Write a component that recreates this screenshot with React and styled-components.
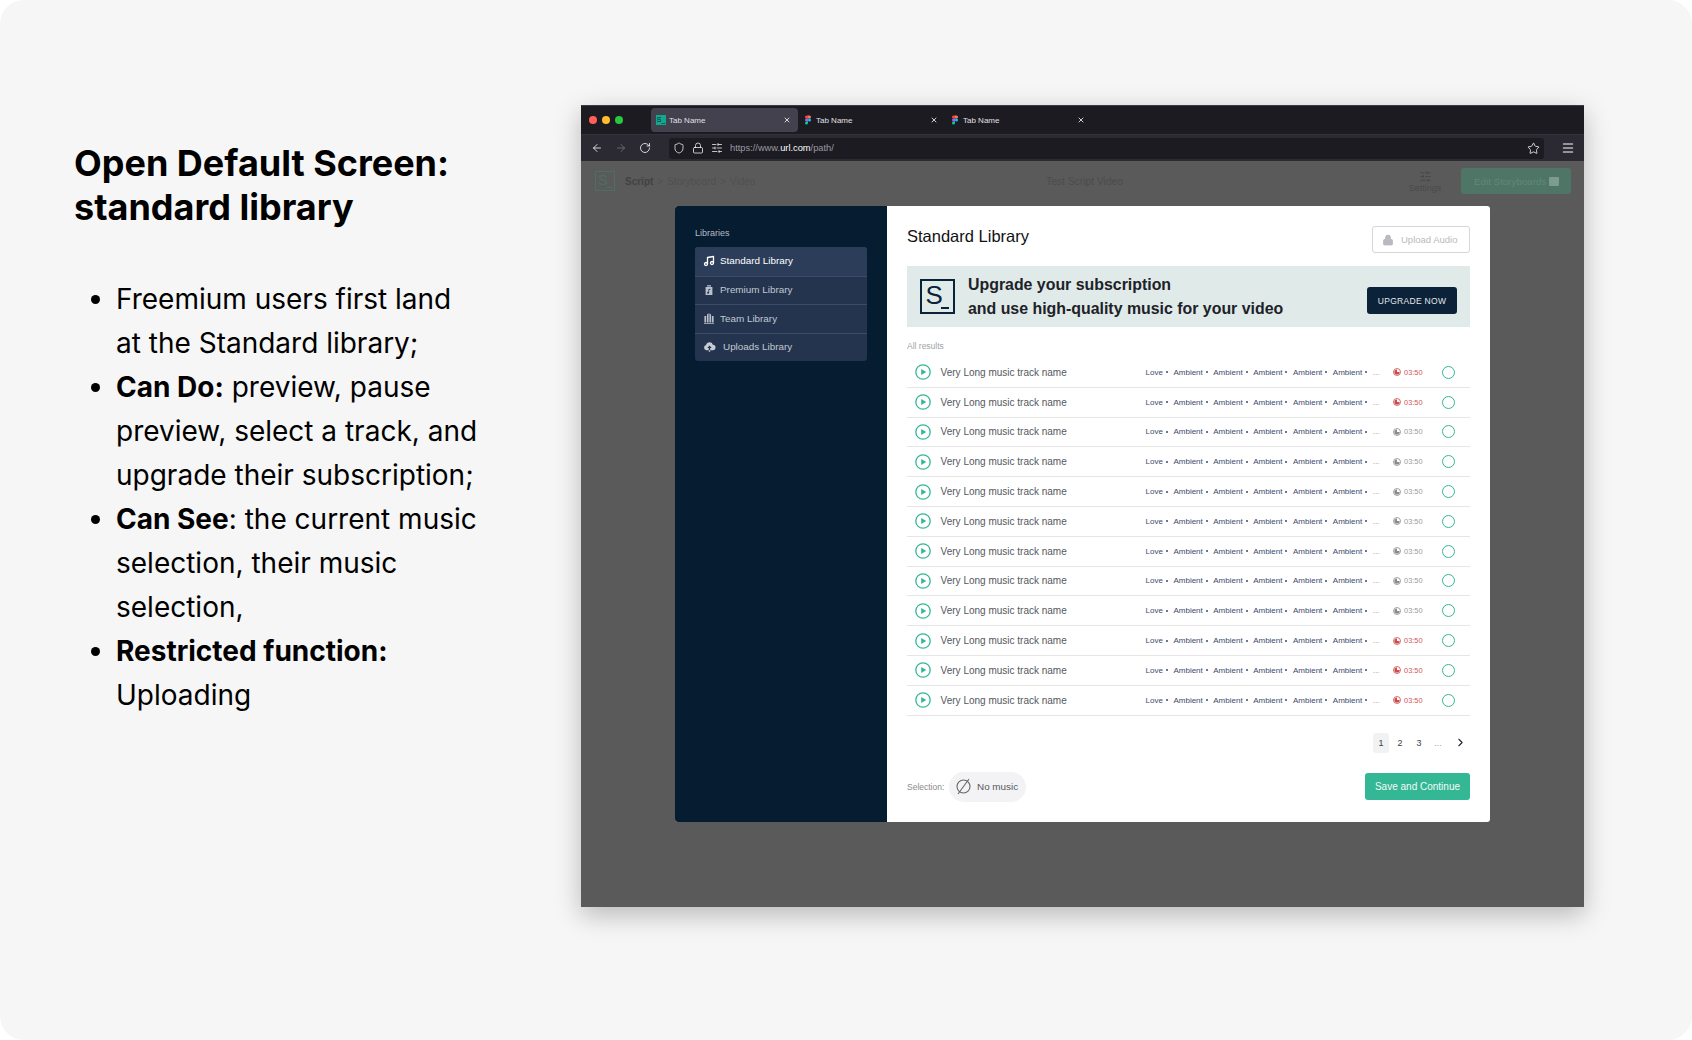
import React from "react";
import styled, { createGlobalStyle } from "styled-components";
import {
  ArrowLeft,
  ArrowRight,
  RotateCw,
  Shield,
  Lock,
  SlidersHorizontal,
  Star,
  Menu,
  X,
  ChevronRight,
  Music,
} from "lucide-react";

const GlobalStyle = createGlobalStyle`
  html, body {
    margin: 0;
    padding: 0;
    background: #fff;
  }
  * {
    box-sizing: border-box;
  }
`;

const tracks = [
  "red", "red", "grey", "grey", "grey", "grey",
  "grey", "grey", "grey", "red", "red", "red",
];

const libraries = [
  { name: "Standard Library", Icon: NoteIcon, active: true },
  { name: "Premium Library", Icon: BagIcon },
  { name: "Team Library", Icon: BuildingIcon },
  { name: "Uploads Library", Icon: CloudIcon, wide: true },
];

function NoteIcon() {
  return <Music size={12} color="#fff" strokeWidth={2.6} />;
}

function BagIcon() {
  return (
    <svg width="12" height="12" viewBox="0 0 12 12" fill="#b9c0cc">
      <path d="M4 1.2h4v1.2H4z" />
      <path d="M2.6 3h6.8v8H2.6zM7.4 4.8 5.4 5.3v2.600a1 1 0 1 0 .7.900V6l1.300-.3z" fillRule="evenodd" />
    </svg>
  );
}

function BuildingIcon() {
  return (
    <svg width="12" height="12" viewBox="0 0 12 12" fill="#b9c0cc">
      <path d="M1 11h10v.7H1zM1.4 4h1.800v6.400H1.400zM4 2.400l1.600-1.200v9.200H4zM6.400 1.200 8 2.400v8H6.400zM8.800 4h1.800v6.400H8.800z" />
    </svg>
  );
}

function CloudIcon() {
  return (
    <svg width="13" height="12" viewBox="0 0 13 12" fill="#c6ccd6">
      <path d="M3.400 9.200A2.600 2.600 0 0 1 3 4.100a3.600 3.600 0 0 1 6.900-.3 2.700 2.700 0 0 1-.2 5.400H7.200V7h1.500L6.500 4.600 4.300 7h1.500v2.200z" />
      <path d="M5.800 9.200h1.400v1.600H5.800z" />
    </svg>
  );
}

function FigmaIcon() {
  return (
    <svg width="10" height="10" viewBox="-2 -0.500 10 10">
      <path d="M0 1.500A1.500 1.500 0 0 1 1.500 0H3v3H1.500A1.500 1.500 0 0 1 0 1.500z" fill="#f24e1e" />
      <path d="M3 0h1.500a1.500 1.500 0 0 1 0 3H3z" fill="#ff7262" />
      <path d="M0 4.500A1.500 1.500 0 0 1 1.500 3H3v3H1.500A1.500 1.500 0 0 1 0 4.500z" fill="#a259ff" />
      <circle cx="4.500" cy="4.500" r="1.500" fill="#1abcfe" />
      <path d="M0 7.500A1.500 1.500 0 0 1 1.500 6H3v1.500a1.500 1.500 0 0 1-3 0z" fill="#0acf83" />
    </svg>
  );
}

function PlayIcon() {
  return (
    <svg width="16" height="16" viewBox="0 0 16 16">
      <circle cx="8" cy="8" r="7.200" fill="none" stroke="#34b794" strokeWidth="1.300" />
      <path d="M6.200 4.900v6.200L11.200 8z" fill="#34b794" />
    </svg>
  );
}

function ClockIcon({ color }) {
  return (
    <svg width="8" height="8" viewBox="0 0 8 8">
      <circle cx="4" cy="4" r="3.500" fill="#fff" stroke={color} strokeWidth="0.800" />
      <path d="M4 4V1.400A2.600 2.600 0 1 0 6.600 4z" fill={color} />
    </svg>
  );
}

function NoMusicIcon() {
  return (
    <svg width="17" height="17" viewBox="0 0 17 17" fill="none" stroke="#666" strokeWidth="1.100">
      <circle cx="8.500" cy="8.500" r="6.500" />
      <path d="M3 16 14 1" />
    </svg>
  );
}

function LogoMark({ size, color, stroke }) {
  return (
    <Logo $size={size} $color={color} $stroke={stroke}>
      S<LogoBar $color={color} />
    </Logo>
  );
}

const Tab = ({ active, children }) => (
  <TabItem $active={active}>
    {children}
    <TabName>Tab Name</TabName>
    <X size={8} color="#fff" strokeWidth={2.4} />
  </TabItem>
);

export default function App() {
  return (
    <Slide>
      <GlobalStyle />
      <Notes>
        <Heading>
          Open Default Screen:
          <br />
          standard library
        </Heading>
        <NoteList>
          <li>Freemium users first land at the Standard library;</li>
          <li>
            <b>Can Do:</b> preview, pause preview, select a track, and upgrade their subscription;
          </li>
          <li>
            <b>Can See</b>: the current music selection, their music selection,
          </li>
          <li>
            <b>Restricted function:</b> Uploading
          </li>
        </NoteList>
      </Notes>

      <BrowserWindow>
        <TabBar>
          <Lights>
            <Light $color="#ff5f57" />
            <Light $color="#febc2e" />
            <Light $color="#28c840" />
          </Lights>
          <Tab active>
            <Favicon>S_</Favicon>
          </Tab>
          <Tab>
            <FigmaIcon />
          </Tab>
          <Tab>
            <FigmaIcon />
          </Tab>
        </TabBar>

        <ToolBar>
          <NavButtons>
            <ArrowLeft size={12} color="#fbfbfe" strokeWidth={1.6} />
            <ArrowRight size={12} color="#77767c" strokeWidth={1.6} />
            <RotateCw size={12} color="#fbfbfe" strokeWidth={1.6} />
          </NavButtons>
          <UrlBar>
            <Shield size={12} color="#fbfbfe" strokeWidth={1.5} />
            <Lock size={12} color="#fbfbfe" strokeWidth={1.5} />
            <SlidersHorizontal size={12} color="#fbfbfe" strokeWidth={1.5} />
            <UrlText>
              https://www.<strong>url.com</strong>/path/
            </UrlText>
            <Star size={13} color="#fbfbfe" strokeWidth={1.5} />
          </UrlBar>
          <Menu size={14} color="#fbfbfe" strokeWidth={1.8} />
        </ToolBar>

        <Page>
          <AppHeader>
            <Crumbs>
              <LogoMark size={20} color="#4d6e62" stroke={1} />
              <CrumbStrong>Script</CrumbStrong>
              <Crumb>&gt;</Crumb>
              <Crumb>Storyboard</Crumb>
              <Crumb>&gt;</Crumb>
              <Crumb>Video</Crumb>
            </Crumbs>
            <VideoTitle>Test Script Video</VideoTitle>
            <SettingsButton>
              <SlidersHorizontal size={13} color="#454545" strokeWidth={1.4} />
              Settings
            </SettingsButton>
            <EditButton>
              Edit Storyboards
              <EditBox />
            </EditButton>
          </AppHeader>

          <Modal>
            <Sidebar>
              <SidebarLabel>Libraries</SidebarLabel>
              <LibraryList>
                {libraries.map(({ name, Icon, active, wide }) => (
                  <LibraryRow key={name} $active={active} $wide={wide}>
                    <Icon />
                    {name}
                  </LibraryRow>
                ))}
              </LibraryList>
            </Sidebar>

            <Content>
              <TitleRow>
                <Title>Standard Library</Title>
                <UploadButton>
                  <Lock size={12} color="#b8bac0" fill="#b8bac0" strokeWidth={1.5} />
                  Upload Audio
                </UploadButton>
              </TitleRow>

              <Banner>
                <LogoMark size={35} color="#0b2238" stroke={2} />
                <BannerText>
                  Upgrade your subscription
                  <br />
                  and use high-quality music for your video
                </BannerText>
                <UpgradeButton>UPGRADE NOW</UpgradeButton>
              </Banner>

              <ResultsLabel>All results</ResultsLabel>

              <TrackList>
                {tracks.map((tone, i) => (
                  <TrackRow key={i}>
                    <PlayIcon />
                    <TrackName>Very Long music track name</TrackName>
                    <Tags>
                      <Tag>Love</Tag>
                      <Tag>Ambient</Tag>
                      <Tag>Ambient</Tag>
                      <Tag>Ambient</Tag>
                      <Tag>Ambient</Tag>
                      <Tag>Ambient</Tag>
                      <More>...</More>
                    </Tags>
                    <Duration $tone={tone}>
                      <ClockIcon color={tone === "red" ? "#cf4a4a" : "#8b8b8b"} />
                      03:50
                    </Duration>
                    <Radio />
                  </TrackRow>
                ))}
              </TrackList>

              <Pagination>
                <PageNumber $active>1</PageNumber>
                <PageNumber>2</PageNumber>
                <PageNumber>3</PageNumber>
                <PageNumber $muted>...</PageNumber>
                <NextPage>
                  <ChevronRight size={13} color="#1c2733" strokeWidth={2} />
                </NextPage>
              </Pagination>

              <Footer>
                <SelectionLabel>Selection:</SelectionLabel>
                <SelectionPill>
                  <NoMusicIcon />
                  No music
                </SelectionPill>
                <SaveButton>Save and Continue</SaveButton>
              </Footer>
            </Content>
          </Modal>
        </Page>
      </BrowserWindow>
    </Slide>
  );
}

const Slide = styled.div`
  width: 1692px;
  height: 1040px;
  display: flex;
  align-items: flex-start;
  background: #f6f6f6;
  border-radius: 24px;
  overflow: hidden;
`;

const Notes = styled.div`
  width: 581px;
  flex-shrink: 0;
  padding: 141px 100px 0 74px;
  font-family: "Inter", sans-serif;
  color: #000;
`;

const Heading = styled.h1`
  margin: 0 0 48px;
  font-size: 36px;
  line-height: 44px;
  font-weight: 700;
`;

const NoteList = styled.ul`
  margin: 0;
  padding: 0 0 0 42px;
  font-size: 28px;
  line-height: 44px;
  font-weight: 400;

  b {
    font-weight: 700;
  }
`;

const BrowserWindow = styled.div`
  width: 1003px;
  height: 802px;
  margin-top: 105px;
  display: flex;
  flex-direction: column;
  box-shadow: 0 8px 24px rgba(0, 0, 0, 0.25);
  font-family: "Liberation Sans", Arial, sans-serif;
`;

const TabBar = styled.div`
  height: 29px;
  padding: 2px 0 2px 8px;
  display: flex;
  align-items: stretch;
  background: #1c1b22;
  border-top: 1px solid #3c3b42;
`;

const Lights = styled.div`
  width: 62px;
  display: flex;
  align-items: center;
  gap: 5px;
`;

const Light = styled.span`
  width: 8px;
  height: 8px;
  border-radius: 50%;
  background: ${(p) => p.$color};
`;

const TabItem = styled.div`
  width: 147px;
  padding: 0 7px 0 5px;
  display: flex;
  align-items: center;
  gap: 3px;
  border-radius: 4px;
  background: ${(p) => (p.$active ? "#42414d" : "transparent")};
`;

const TabName = styled.span`
  flex: 1;
  font-size: 8px;
  color: #e0e0e4;
`;

const Favicon = styled.span`
  width: 10px;
  height: 10px;
  background: #0eaa8b;
  color: #0b2238;
  font-size: 7px;
  line-height: 10px;
  text-align: center;
`;

const ToolBar = styled.div`
  height: 27px;
  padding: 3px 9px 3px 10px;
  display: flex;
  align-items: center;
  background: #2b2a33;
  border-top: 1px solid #33323b;
`;

const NavButtons = styled.div`
  width: 78px;
  display: flex;
  gap: 12px;
`;

const UrlBar = styled.div`
  width: 875px;
  height: 21px;
  margin-right: 17px;
  padding: 0 4px 0 4px;
  display: flex;
  align-items: center;
  gap: 7px;
  border-radius: 3px;
  background: #1c1b22;
`;

const UrlText = styled.span`
  flex: 1;
  font-size: 9.300px;
  color: #9a9aa0;

  strong {
    font-weight: 400;
    color: #fbfbfe;
  }
`;

const Page = styled.div`
  flex: 1;
  display: flex;
  flex-direction: column;
  background: #5a5a5a;
`;

const AppHeader = styled.div`
  height: 45px;
  padding: 7px 13px 12px 14px;
  display: flex;
  align-items: center;
`;

const Crumbs = styled.div`
  width: 451px;
  display: flex;
  align-items: center;
  gap: 4px;
`;

const Logo = styled.div`
  position: relative;
  flex-shrink: 0;
  width: ${(p) => p.$size}px;
  height: ${(p) => p.$size}px;
  padding-left: ${(p) => p.$size * 0.1}px;
  border: ${(p) => p.$stroke}px solid ${(p) => p.$color};
  color: ${(p) => p.$color};
  font-size: ${(p) => p.$size * 0.74}px;
  line-height: ${(p) => p.$size * 0.8}px;
`;

const LogoBar = styled.span`
  position: absolute;
  right: 12%;
  bottom: 10%;
  width: 26%;
  height: 5%;
  min-height: 1px;
  background: ${(p) => p.$color};
`;

const CrumbStrong = styled.span`
  margin-left: 6px;
  font-size: 10px;
  font-weight: 700;
  color: #424242;
`;

const Crumb = styled.span`
  font-size: 10px;
  color: #505050;
`;

const VideoTitle = styled.div`
  width: 355px;
  font-size: 10.300px;
  color: #4c4c4c;
`;

const SettingsButton = styled.div`
  width: 48px;
  margin-right: 12px;
  display: flex;
  flex-direction: column;
  align-items: center;
  font-size: 9px;
  line-height: 10px;
  color: #4a4a4a;
`;

const EditButton = styled.div`
  width: 110px;
  height: 26px;
  padding: 0 12px 0 13px;
  display: flex;
  align-items: center;
  justify-content: space-between;
  border-radius: 3px;
  background: #4f7567;
  font-size: 9.800px;
  color: #5f8878;
`;

const EditBox = styled.span`
  width: 10px;
  height: 9px;
  border-radius: 1px;
  background: #7e9b90;
`;

const Modal = styled.div`
  width: 815px;
  height: 616px;
  margin: 0 auto;
  display: flex;
  border-radius: 3px;
  overflow: hidden;
  background: #fff;
`;

const Sidebar = styled.div`
  width: 212px;
  padding: 21px 20px 0;
  background: #061c30;
`;

const SidebarLabel = styled.div`
  height: 20px;
  font-size: 9px;
  line-height: 12px;
  color: #b6bdc6;
`;

const LibraryList = styled.div`
  border-radius: 3px;
  overflow: hidden;
  background: #24344f;
`;

const LibraryRow = styled.div`
  height: 28.500px;
  padding: 0 0 1px 8px;
  display: flex;
  align-items: center;
  gap: ${(p) => (p.$wide ? 7 : 5)}px;
  font-size: 9.900px;
  color: ${(p) => (p.$active ? "#fff" : "#c2c8d2")};
  background: ${(p) => (p.$active ? "#2c3d5a" : "transparent")};

  & + & {
    border-top: 1px solid #3c4c68;
  }
`;

const Content = styled.div`
  flex: 1;
  padding: 20px 20px 0;
  display: flex;
  flex-direction: column;
`;

const TitleRow = styled.div`
  height: 40px;
  display: flex;
  justify-content: space-between;
  align-items: flex-start;
`;

const Title = styled.h2`
  margin: 0;
  font-size: 16.500px;
  line-height: 20px;
  font-weight: 400;
  color: #111;
`;

const UploadButton = styled.div`
  width: 98px;
  height: 27px;
  padding-left: 9px;
  display: flex;
  align-items: center;
  gap: 7px;
  border: 1px solid #d4d6da;
  border-radius: 3px;
  font-size: 9.500px;
  color: #b8bac0;
`;

const Banner = styled.div`
  height: 61px;
  padding: 0 13px;
  display: flex;
  align-items: center;
  gap: 13px;
  background: #e0eae8;
`;

const BannerText = styled.div`
  flex: 1;
  font-size: 15.900px;
  line-height: 24px;
  font-weight: 700;
  color: #1d2228;
`;

const UpgradeButton = styled.div`
  width: 90px;
  height: 27px;
  margin-top: 8px;
  display: flex;
  align-items: center;
  justify-content: center;
  border-radius: 3px;
  background: #0b2238;
  font-size: 8.500px;
  letter-spacing: 0.3px;
  color: #e4e8ec;
`;

const ResultsLabel = styled.div`
  height: 31px;
  padding-top: 13px;
  font-size: 8.500px;
  line-height: 12px;
  color: #a2a4a8;
`;

const TrackList = styled.div`
  display: flex;
  flex-direction: column;
`;

const TrackRow = styled.div`
  height: 29.800px;
  padding-left: 8px;
  display: flex;
  align-items: center;
  border-bottom: 1px solid #e6e6e6;
`;

const TrackName = styled.div`
  width: 205px;
  margin-left: 9.600px;
  font-size: 10px;
  color: #55585e;
`;

const Tags = styled.div`
  width: 247.500px;
  display: flex;
  align-items: center;
`;

const Tag = styled.span`
  font-size: 8px;
  color: #3d4a6e;

  &::after {
    content: "";
    display: inline-block;
    width: 2px;
    height: 2px;
    margin: 0 5.600px 1.500px 2.900px;
    border-radius: 50%;
    background: #3d4a6e;
  }
`;

const More = styled.span`
  font-size: 8px;
  color: #8b8f98;
`;

const Duration = styled.div`
  width: 48.500px;
  display: flex;
  align-items: center;
  gap: 3px;
  font-size: 7.400px;
  color: ${(p) => (p.$tone === "red" ? "#cf5656" : "#9a9a9a")};
`;

const Radio = styled.span`
  width: 13px;
  height: 13px;
  border: 1px solid #34b794;
  border-radius: 50%;
`;

const Pagination = styled.div`
  margin-top: 17px;
  padding-right: 2px;
  display: flex;
  justify-content: flex-end;
  align-items: center;
  gap: 3px;
`;

const PageNumber = styled.span`
  width: 16px;
  height: 20px;
  display: flex;
  align-items: center;
  justify-content: center;
  border-radius: 3px;
  font-size: 9px;
  color: ${(p) => (p.$muted ? "#a0a0a0" : "#3a4048")};
  background: ${(p) => (p.$active ? "#f1f2f4" : "transparent")};
`;

const NextPage = styled(PageNumber)`
  margin-left: 3px;
`;

const Footer = styled.div`
  margin-top: 19px;
  display: flex;
  align-items: center;
`;

const SelectionLabel = styled.span`
  width: 42px;
  font-size: 8.500px;
  color: #8a8a8a;
`;

const SelectionPill = styled.div`
  width: 77px;
  height: 30px;
  padding-left: 6px;
  display: flex;
  align-items: center;
  gap: 5px;
  border-radius: 15px;
  background: #f3f3f5;
  font-size: 9.900px;
  color: #55585e;
`;

const SaveButton = styled.div`
  width: 105px;
  height: 27px;
  margin-left: auto;
  display: flex;
  align-items: center;
  justify-content: center;
  border-radius: 3px;
  background: #34b794;
  font-size: 10px;
  color: #f2fbf8;
`;
